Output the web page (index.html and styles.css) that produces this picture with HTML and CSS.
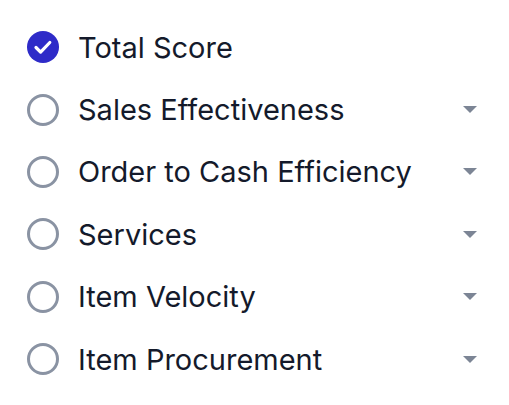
FILE: index.html
```html
<!DOCTYPE html>
<html lang="en">
<head>
    <meta charset="UTF-8">
    <title>Score Filters</title>
    <link rel="stylesheet" href="styles.css">
</head>
<body>
    <ul class="score-list">
        <li class="score-item">
            <span class="radio checked">
                <svg viewBox="0 0 32 32" width="32" height="32"><circle cx="16" cy="16" r="16" fill="#2e2bc8"/><path d="M9 16.5l4.6 4.6 9.2-9.6" fill="none" stroke="#fff" stroke-width="3.2" stroke-linecap="round" stroke-linejoin="round"/></svg>
            </span>
            <span class="label">Total Score</span>
        </li>
        <li class="score-item">
            <span class="radio"></span>
            <span class="label">Sales Effectiveness</span>
            <span class="caret"></span>
        </li>
        <li class="score-item">
            <span class="radio"></span>
            <span class="label">Order to Cash Efficiency</span>
            <span class="caret"></span>
        </li>
        <li class="score-item">
            <span class="radio"></span>
            <span class="label">Services</span>
            <span class="caret"></span>
        </li>
        <li class="score-item">
            <span class="radio"></span>
            <span class="label">Item Velocity</span>
            <span class="caret"></span>
        </li>
        <li class="score-item">
            <span class="radio"></span>
            <span class="label">Item Procurement</span>
            <span class="caret"></span>
        </li>
    </ul>
</body>
</html>
```

FILE: styles.css
```css
body {
    margin: 0;
    background: #fff;
    font-family: Inter, "Noto Sans", sans-serif;
    color: #141a2b;
}

.score-list {
    list-style: none;
    margin: 0;
    padding: 16px 30px 0 27px;
}

.score-item {
    display: flex;
    align-items: center;
    height: 62.4px;
}

.radio {
    width: 32px;
    height: 32px;
    box-sizing: border-box;
    border: 3px solid #8a93a3;
    border-radius: 50%;
    flex-shrink: 0;
}

.radio.checked {
    border: none;
}

.radio svg {
    display: block;
}

.label {
    margin-left: 19px;
    font-size: 29px;
    flex: 1;
}

.caret {
    width: 0;
    height: 0;
    border-left: 7px solid transparent;
    border-right: 7px solid transparent;
    border-top: 7px solid #7c8595;
    margin-right: 2px;
}
```
